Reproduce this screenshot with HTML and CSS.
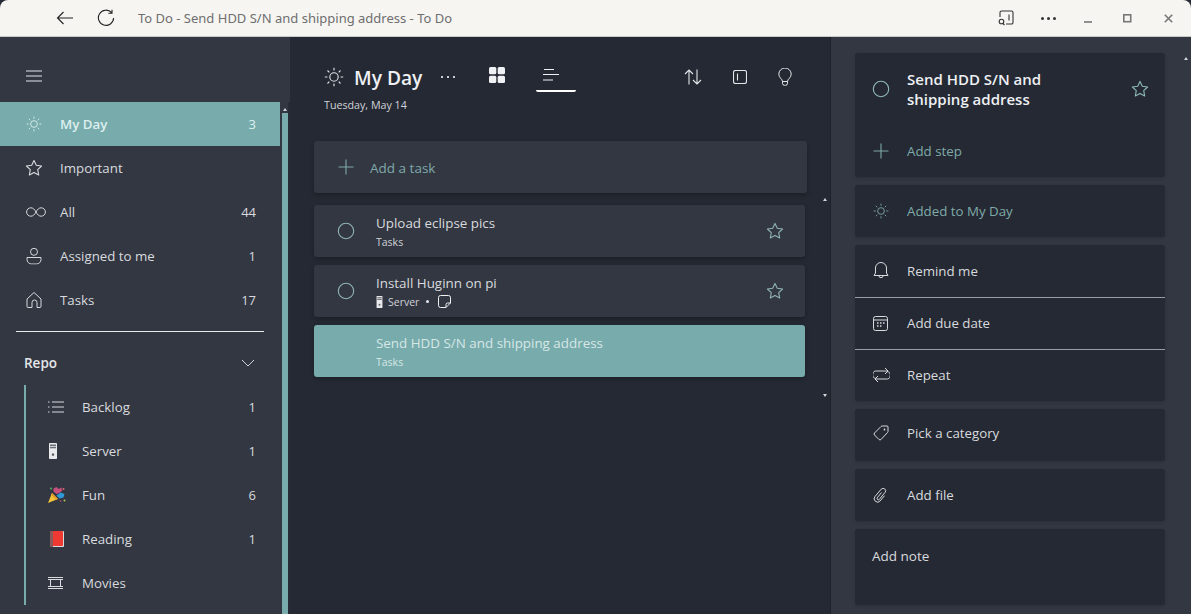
FILE: index.html
```html
<!DOCTYPE html>
<html lang="en">
<head>
<meta charset="UTF-8">
<meta name="viewport" content="width=device-width, initial-scale=1.0">
<title>To Do - Send HDD S/N and shipping address - To Do</title>
<link rel="stylesheet" href="styles.css">
</head>
<body>
<svg class="sprite" width="0" height="0">
    <symbol id="sun" viewBox="0 0 20 20">
        <circle cx="10" cy="10" r="4.2" fill="none" stroke="currentColor" stroke-width="1.1"/>
        <path d="M10 .8v2.6M10 16.6v2.6M.8 10h2.6M16.6 10h2.6M3.5 3.5l1.8 1.8M14.7 14.7l1.8 1.8M3.5 16.5l1.8-1.8M14.7 5.3l1.8-1.8" fill="none" stroke="currentColor" stroke-width="1.1"/>
    </symbol>
    <symbol id="star" viewBox="0 0 18 18">
        <path d="M9 1.4l2.3 4.9 5.3.7-3.9 3.7 1 5.3L9 13.4l-4.7 2.6 1-5.3L1.4 7l5.3-.7z" fill="none" stroke="currentColor" stroke-width="1.1" stroke-linejoin="round"/>
    </symbol>
    <symbol id="ring" viewBox="0 0 18 18">
        <circle cx="9" cy="9" r="7.7" fill="none" stroke="currentColor" stroke-width="1.1"/>
    </symbol>
    <symbol id="plus" viewBox="0 0 16 16">
        <path d="M8 .5v15M.5 8h15" fill="none" stroke="currentColor" stroke-width="1.1"/>
    </symbol>
    <symbol id="server" viewBox="0 0 9 16">
        <rect x=".5" width="8" height="16" rx=".8" fill="#e8eaec"/>
        <rect x="1.5" y="1.5" width="6" height="1.5" fill="#6b7078"/>
        <rect x="1.5" y="3.800" width="6" height="1.500" fill="#6b7078"/>
        <rect x="3.400" y="10.500" width="2.200" height="2.200" fill="#555b63"/>
    </symbol>
</svg>

<header class="titlebar">
    <svg class="tb-back" width="18" height="14" viewBox="0 0 18 14"><path d="M17 7H1.5M7.5 1L1.5 7l6 6" fill="none" stroke="#222" stroke-width="1.1"/></svg>
    <svg class="tb-reload" width="18" height="18" viewBox="0 0 18 18"><path d="M14.6 3.6A7.6 7.6 0 1 0 16.6 9M15 .8v3.4h-3.6" fill="none" stroke="#222" stroke-width="1.1"/></svg>
    <span class="tb-title">To Do - Send HDD S/N and shipping address - To Do</span>
    <div class="tb-controls">
        <svg width="16" height="16" viewBox="0 0 16 16"><path d="M2 7V2.500A1.500 1.500 0 0 1 3.500 1h10A1.500 1.500 0 0 1 15 2.500v10a1.500 1.500 0 0 1-1.500 1.500H8M11 4.500v6" fill="none" stroke="#333" stroke-width="1.100"/><circle cx="3.500" cy="11.500" r="2.300" fill="none" stroke="#333" stroke-width="1.100"/><path d="M5 13.500l1.500 1.500" stroke="#333" stroke-width="1.100"/></svg>
        <span class="tb-dots"><i></i><i></i><i></i></span>
        <svg class="tb-min" width="9" height="9" viewBox="0 0 9 9"><path d="M0 8h8" stroke="#777" stroke-width="1.600"/></svg>
        <svg class="tb-max" width="9" height="9" viewBox="0 0 9 9"><rect x=".8" y=".8" width="6.900" height="6.900" fill="none" stroke="#777" stroke-width="1.600"/></svg>
        <svg class="tb-close" width="9" height="9" viewBox="0 0 9 9"><path d="M.8.800l7.400 7.400M8.200.800L.8 8.200" stroke="#777" stroke-width="1.600"/></svg>
    </div>
</header>

<div class="app">
    <aside class="sidebar">
        <div class="side-head">
            <svg width="16" height="12" viewBox="0 0 16 12"><path d="M0 1h16M0 6h16M0 11h16" stroke="#e4e6ea" stroke-width="1"/></svg>
        </div>
        <div class="side-body">
            <nav class="side-list">
                <div class="nav-row active">
                    <svg class="nav-icon" width="16" height="16"><use href="#sun"/></svg>
                    <span class="nav-name">My Day</span><span class="nav-count">3</span>
                </div>
                <div class="nav-row">
                    <svg class="nav-icon" width="18" height="18"><use href="#star"/></svg>
                    <span class="nav-name">Important</span>
                </div>
                <div class="nav-row">
                    <svg class="nav-icon wide" width="20" height="10" viewBox="0 0 20 10"><path d="M10 5C8.500 2.200 7 .8 4.800.8a4.200 4.200 0 0 0 0 8.400C7 9.200 8.500 7.800 10 5c1.500-2.800 3-4.200 5.200-4.200a4.200 4.200 0 0 1 0 8.400C13 9.200 11.500 7.800 10 5z" fill="none" stroke="currentColor" stroke-width="1"/></svg>
                    <span class="nav-name">All</span><span class="nav-count">44</span>
                </div>
                <div class="nav-row">
                    <svg class="nav-icon" width="16" height="17" viewBox="0 0 16 17"><circle cx="8" cy="4.300" r="3.500" fill="none" stroke="currentColor" stroke-width="1"/><path d="M1 10h14v2a4.500 4.500 0 0 1-4.500 4.500h-5A4.500 4.500 0 0 1 1 12z" fill="none" stroke="currentColor" stroke-width="1"/></svg>
                    <span class="nav-name">Assigned to me</span><span class="nav-count">1</span>
                </div>
                <div class="nav-row">
                    <svg class="nav-icon" width="16" height="17" viewBox="0 0 16 17"><path d="M1 7.500L8 1l7 6.500V15a1 1 0 0 1-1 1h-3v-5a2.500 2.500 0 0 0-5 0v5H2a1 1 0 0 1-1-1z" fill="none" stroke="currentColor" stroke-width="1" stroke-linejoin="round"/></svg>
                    <span class="nav-name">Tasks</span><span class="nav-count">17</span>
                </div>
                <div class="side-rule"></div>
                <div class="group-head">
                    <span>Repo</span>
                    <svg width="14" height="8" viewBox="0 0 14 8"><path d="M1 1l6 6 6-6" fill="none" stroke="#cfd2d8" stroke-width="1"/></svg>
                </div>
                <div class="group-items">
                    <div class="nav-row sub">
                        <svg class="nav-icon" width="16" height="12" viewBox="0 0 16 12"><path d="M4 1h12M4 6h12M4 11h12" stroke="currentColor" stroke-width="1"/><path d="M0 1h1.500M0 6h1.500M0 11h1.500" stroke="currentColor" stroke-width="1.200"/></svg>
                        <span class="nav-name">Backlog</span><span class="nav-count">1</span>
                    </div>
                    <div class="nav-row sub">
                        <svg class="nav-icon left" width="9" height="16"><use href="#server"/></svg>
                        <span class="nav-name">Server</span><span class="nav-count">1</span>
                    </div>
                    <div class="nav-row sub">
                        <svg class="nav-icon right" width="18" height="17" viewBox="0 0 18 17"><path d="M4 6.500L0 16.500l10-4z" fill="#f5c33b"/><path d="M4 6.500l6 6-2 .8-5-5z" fill="#e39a2c"/><path d="M5.500 2l3-1.500 2 2 3-1.500 .5 3.500-3 2-2.500 1-3-2.500z" fill="#c8507c"/><path d="M8.500 9l4-3 4 1.500-1 3.500-4 1z" fill="#2f9ad6"/><circle cx="15.500" cy="2.500" r="1" fill="#e8637a"/><circle cx="3" cy="2" r="1" fill="#58b368"/><circle cx="16.500" cy="14" r="1" fill="#b9c44a"/><circle cx="12.500" cy="14.500" r=".8" fill="#c8507c"/></svg>
                        <span class="nav-name">Fun</span><span class="nav-count">6</span>
                    </div>
                    <div class="nav-row sub">
                        <svg class="nav-icon right" width="14" height="16" viewBox="0 0 14 16"><rect width="14" height="16" rx="1" fill="#d9dbdd"/><rect x="0" y="0" width="13" height="15" rx="1" fill="#ee3a33"/><rect x="0" width="3" height="16" fill="#8a5a5a"/></svg>
                        <span class="nav-name">Reading</span><span class="nav-count">1</span>
                    </div>
                    <div class="nav-row sub">
                        <svg class="nav-icon" width="16" height="12" viewBox="0 0 16 12"><path d="M0 .5h15M0 2.500h15M0 9.500h15M0 11.500h15" stroke="currentColor" stroke-width="1"/><path d="M2.500 2.500v7M12.500 2.500v7" stroke="currentColor" stroke-width="1"/></svg>
                        <span class="nav-name">Movies</span>
                    </div>
                </div>
            </nav>
            <div class="side-scroll"><span class="arrow-up"></span><div class="side-thumb"></div></div>
        </div>
    </aside>

    <main class="main">
        <div class="main-head">
            <div class="head-left">
                <div class="head-title">
                    <svg width="20" height="20"><use href="#sun"/></svg>
                    <h1>My Day</h1>
                    <span class="head-dots"><i></i><i></i><i></i></span>
                </div>
                <p class="head-date">Tuesday, May 14</p>
            </div>
            <div class="view-tabs">
                <div class="view-tab">
                    <svg width="16" height="16" viewBox="0 0 16 16"><rect width="7.300" height="7.300" rx="1.500" fill="#f0f1f4"/><rect x="8.700" width="7.300" height="7.300" rx="1.500" fill="#f0f1f4"/><rect y="8.700" width="7.300" height="7.300" rx="1.500" fill="#f0f1f4"/><rect x="8.700" y="8.700" width="7.300" height="7.300" rx="1.500" fill="#f0f1f4"/></svg>
                </div>
                <div class="view-tab current">
                    <svg width="16" height="12" viewBox="0 0 16 12"><path d="M1 .5h10M0 5.500h16M0 11h10" stroke="#f0f1f4" stroke-width="1"/></svg>
                </div>
            </div>
            <div class="head-tools">
                <svg width="18" height="16" viewBox="0 0 18 16"><path d="M5 15.500V1M1 5l4-4 4 4M13 .5V15M9 11l4 4 4-4" fill="none" stroke="#e4e6ea" stroke-width="1.100"/></svg>
                <svg width="14" height="14" viewBox="0 0 14 14"><rect x=".5" y=".5" width="13" height="13" rx="2" fill="none" stroke="#e4e6ea" stroke-width="1.100"/><path d="M4.500 3.500v7" stroke="#e4e6ea" stroke-width="1.100"/></svg>
                <svg width="14" height="18" viewBox="0 0 14 18"><path d="M4.500 13.500C4.500 11 .8 9.800.8 6.200a6.200 6.200 0 0 1 12.400 0c0 3.600-3.700 4.800-3.700 7.300zM4.500 13.500v1.800a2 2 0 0 0 2 2h1a2 2 0 0 0 2-2v-1.800" fill="none" stroke="#e4e6ea" stroke-width="1"/></svg>
            </div>
        </div>

        <div class="main-body">
            <div class="add-task">
                <svg width="16" height="16"><use href="#plus"/></svg>
                <span>Add a task</span>
            </div>
            <div class="task">
                <svg class="task-ring" width="18" height="18"><use href="#ring"/></svg>
                <div class="task-text"><div class="task-name">Upload eclipse pics</div><div class="task-meta">Tasks</div></div>
                <svg class="task-star" width="18" height="18"><use href="#star"/></svg>
            </div>
            <div class="task">
                <svg class="task-ring" width="18" height="18"><use href="#ring"/></svg>
                <div class="task-text">
                    <div class="task-name">Install Huginn on pi</div>
                    <div class="task-meta">
                        <svg width="7" height="12" viewBox="0 0 9 16"><use href="#server"/></svg>
                        <span>Server</span><span class="meta-dot"></span>
                        <svg width="13" height="13" viewBox="0 0 13 13"><path d="M12.500 8V2.500a2 2 0 0 0-2-2h-8a2 2 0 0 0-2 2v8a2 2 0 0 0 2 2H8zM12.500 8H9.500A1.500 1.500 0 0 0 8 9.500v3" fill="none" stroke="#f0f1f4" stroke-width="1"/></svg>
                    </div>
                </div>
                <svg class="task-star" width="18" height="18"><use href="#star"/></svg>
            </div>
            <div class="task selected">
                <div class="task-text"><div class="task-name">Send HDD S/N and shipping address</div><div class="task-meta">Tasks</div></div>
            </div>
            <span class="arrow-up main-up"></span>
            <span class="arrow-down main-down"></span>
        </div>
    </main>

    <section class="detail">
        <span class="arrow-up detail-up"></span>
        <div class="card head-card">
            <div class="detail-title">
                <svg class="accent" width="18" height="18"><use href="#ring"/></svg>
                <h2>Send HDD S/N and shipping address</h2>
                <svg class="accent" width="18" height="18"><use href="#star"/></svg>
            </div>
            <div class="row muted">
                <svg width="16" height="16"><use href="#plus"/></svg>
                <span>Add step</span>
            </div>
        </div>
        <div class="card">
            <div class="row muted">
                <svg width="16" height="16"><use href="#sun"/></svg>
                <span>Added to My Day</span>
            </div>
        </div>
        <div class="card stack">
            <div class="row ruled">
                <svg width="16" height="17" viewBox="0 0 16 17"><path d="M1 13.500h14l-1.500-2.500V6a5.500 5.500 0 0 0-11 0v5zM5.800 13.500a2.200 2.200 0 0 0 4.400 0" fill="none" stroke="currentColor" stroke-width="1" stroke-linejoin="round"/></svg>
                <span>Remind me</span>
            </div>
            <div class="row ruled">
                <svg width="15" height="15" viewBox="0 0 15 15"><rect x=".5" y=".5" width="14" height="14" rx="2" fill="none" stroke="currentColor" stroke-width="1"/><path d="M.5 4h14" stroke="currentColor" stroke-width="1"/><path d="M4 7h1.500M7 7h1.500M10 7h1.500M4 10h1.500M7 10h1.500" stroke="currentColor" stroke-width="1.300"/></svg>
                <span>Add due date</span>
            </div>
            <div class="row">
                <svg width="17" height="16" viewBox="0 0 17 16"><path d="M3 11.500A3.500 3.500 0 0 1 4 4h11M12 1l3 3-3 3M14 4.500A3.500 3.500 0 0 1 13 12H2M5 9l-3 3 3 3" fill="none" stroke="currentColor" stroke-width="1"/></svg>
                <span>Repeat</span>
            </div>
        </div>
        <div class="card">
            <div class="row raised">
                <svg width="16" height="16" viewBox="0 0 16 16"><path d="M9.500 1H14a1 1 0 0 1 1 1v4.500a1.500 1.500 0 0 1-.5 1L8 14.500a1.500 1.500 0 0 1-2 0L1.500 10a1.500 1.500 0 0 1 0-2L8 1.500A1.500 1.500 0 0 1 9.500 1z" fill="none" stroke="currentColor" stroke-width="1"/><circle cx="11.500" cy="4.500" r=".9" fill="currentColor"/></svg>
                <span>Pick a category</span>
            </div>
        </div>
        <div class="card">
            <div class="row">
                <svg width="14" height="15" viewBox="0 0 14 15"><path d="M8.500 4.500l-4.300 5.400a1.300 1.300 0 0 0 2 1.600l6-7.300a2.500 2.500 0 0 0-3.900-3.100L2 8.500a3.400 3.400 0 0 0 5.200 4.400l4.300-5.200" fill="none" stroke="currentColor" stroke-width="1"/></svg>
                <span>Add file</span>
            </div>
        </div>
        <div class="card note-card">Add note</div>
    </section>
</div>
</body>
</html>
```

FILE: styles.css
```css
* {
    box-sizing: border-box;
}
html, body {
    height: 100%;
    margin: 0;
}
body {
    font-family: "Open Sans", "Noto Sans", sans-serif;
    background-color: #252933;
    color: #e4e6ea;
    overflow: hidden;
    display: flex;
    flex-direction: column;
}
.sprite {
    position: absolute;
}
svg {
    display: block;
    flex-shrink: 0;
}

/* window title bar */
.titlebar {
    height: 37px;
    flex-shrink: 0;
    display: flex;
    align-items: center;
    background-color: #f6f5f2;
    border-bottom: 1px solid #c9c9c9;
    border-radius: 8px 8px 0 0;
    padding-left: 56px;
}
.tb-back {
    margin-right: 23px;
}
.tb-reload {
    margin-right: 23px;
}
.tb-title {
    font-family: "Noto Sans", sans-serif;
    font-size: 13px;
    color: #6e6e6e;
}
.tb-controls {
    margin-left: auto;
    display: flex;
    align-items: center;
    padding-right: 18px;
}
.tb-dots {
    display: flex;
    gap: 3px;
    margin-left: 27px;
    margin-right: 28px;
}
.tb-dots i {
    width: 3px;
    height: 3px;
    border-radius: 50%;
    background-color: #333;
}
.tb-min {
    margin-right: 30px;
}
.tb-max {
    margin-right: 32px;
}

.app {
    flex: 1;
    display: flex;
    min-height: 0;
}

/* left nav */
.sidebar {
    width: 290px;
    flex-shrink: 0;
    background-color: #333742;
    display: flex;
    flex-direction: column;
}
.side-head {
    height: 65px;
    flex-shrink: 0;
    padding: 33px 0 0 26px;
}
.side-body {
    flex: 1;
    display: flex;
    min-height: 0;
    overflow: hidden;
}
.side-list {
    width: 280px;
    flex-shrink: 0;
}
.side-scroll {
    width: 10px;
    display: flex;
    flex-direction: column;
    align-items: center;
    padding-top: 6px;
    background: linear-gradient(to right, #333742 8px, #282c36 8px);
}
.side-thumb {
    width: 6px;
    flex: 1;
    margin-top: 2px;
    background-color: #78abab;
}
.arrow-up, .arrow-down {
    display: block;
    width: 0;
    height: 0;
    border-left: 2.500px solid transparent;
    border-right: 2.500px solid transparent;
}
.arrow-up {
    border-bottom: 3px solid #cfd8d8;
}
.arrow-down {
    border-top: 3px solid #cfd8d8;
}
.nav-row {
    height: 44px;
    display: flex;
    align-items: center;
    padding-left: 34px;
    padding-right: 24px;
    font-size: 13.300px;
    color: #d8dade;
    position: relative;
}
.nav-row .nav-icon {
    position: absolute;
    left: 34px;
    top: 50%;
    transform: translate(-50%, -50%);
}
.nav-row .nav-icon.wide {
    left: 36px;
}
.nav-name {
    margin-left: 26px;
}
.nav-count {
    margin-left: auto;
    font-size: 13px;
}
.nav-row.active {
    background-color: #78abab;
    color: #dcefef;
    font-weight: 600;
}
.nav-row.active .nav-count {
    font-weight: 400;
}
.side-rule {
    height: 1px;
    margin: 9px 16px;
    background-color: #e8e9ec;
}
.group-head {
    height: 44px;
    display: flex;
    align-items: center;
    justify-content: space-between;
    padding: 0 25px 0 24px;
    font-size: 13.500px;
    font-weight: 600;
}
.group-items {
    margin-left: 24px;
    border-left: 2px solid #78abab;
}
.nav-row.sub {
    padding-left: 30px;
    padding-right: 24px;
}
.nav-row.sub .nav-icon {
    left: 30px;
}
.nav-row.sub .nav-icon.left {
    left: 27px;
}
.nav-row.sub .nav-icon.right {
    left: 31px;
}

/* middle column */
.main {
    width: 541px;
    flex-shrink: 0;
    display: flex;
    flex-direction: column;
    border-right: 1px solid #1e2129;
}
.main-head {
    height: 104px;
    flex-shrink: 0;
    display: flex;
    padding: 29px 0 0 34px;
}
.head-left {
    width: 153px;
}
.head-title {
    display: flex;
    align-items: center;
    height: 22px;
}
h1 {
    margin: 0 0 0 10px;
    font-size: 19.200px;
    font-weight: 600;
    color: #eef0f4;
    white-space: nowrap;
}
.head-dots {
    display: flex;
    gap: 4px;
    margin-left: 19px;
}
.head-dots i {
    width: 2px;
    height: 2px;
    background-color: #c9ccd2;
}
.head-date {
    margin: 10px 0 0;
    font-size: 10.700px;
    color: #cfd2d8;
    white-space: nowrap;
}
.view-tabs {
    display: flex;
    align-self: flex-start;
}
.view-tab {
    width: 40px;
    height: 26px;
    display: flex;
    justify-content: center;
    padding-top: 1px;
}
.view-tab.current {
    margin-left: 19px;
    padding: 3px 0 0 7px;
    justify-content: flex-start;
    border-bottom: 2px solid #fff;
    border-radius: 2px;
}
.head-tools {
    display: flex;
    align-items: center;
    gap: 31px;
    height: 22px;
    margin-left: 108px;
    align-self: flex-start;
}
.main-body {
    flex: 1;
    position: relative;
    padding-left: 24px;
}
.add-task {
    width: 493px;
    height: 52px;
    display: flex;
    align-items: center;
    padding-left: 24px;
    background-color: #333742;
    border-radius: 3px;
    box-shadow: 0 2px 5px rgba(0, 0, 0, 0.25);
    color: #7fa9a9;
    font-size: 13.500px;
    margin-bottom: 12px;
}
.add-task span {
    margin-left: 16px;
    padding-top: 2px;
}
.task {
    width: 491px;
    height: 52px;
    display: flex;
    align-items: center;
    padding: 0 21px 0 23px;
    background-color: #333742;
    border-radius: 3px;
    box-shadow: 0 2px 4px rgba(0, 0, 0, 0.25);
    margin-bottom: 8px;
}
.task-ring, .task-star {
    color: #8fb3b3;
}
.task-text {
    margin-left: 21px;
    flex: 1;
    padding-top: 3px;
}
.task-name {
    font-size: 13.400px;
    line-height: 18px;
    color: #d8dade;
}
.task-meta {
    display: flex;
    align-items: center;
    height: 19px;
    font-size: 10.500px;
    color: #cfd2d8;
    gap: 5px;
}
.meta-dot {
    width: 3px;
    height: 3px;
    border-radius: 50%;
    background-color: #e4e6ea;
    margin: 0 4px 0 2px;
}
.task.selected {
    background-color: #78abab;
    padding-left: 41px;
}
.task.selected .task-name, .task.selected .task-meta {
    color: #d6e7e7;
}
.main-up, .main-down {
    position: absolute;
    left: 533px;
}
.main-up {
    top: 57px;
}
.main-down {
    top: 253px;
}

/* right column */
.detail {
    flex: 1;
    background-color: #333742;
    padding: 16px 26px 0 24px;
    display: flex;
    flex-direction: column;
    gap: 8px;
    position: relative;
}
.detail-up {
    position: absolute;
    right: 3px;
    top: 20px;
}
.card {
    background-color: #252933;
    border-radius: 3px;
    box-shadow: 0 1px 3px rgba(0, 0, 0, 0.15);
}
.head-card {
    height: 124px;
}
.detail-title {
    height: 72px;
    display: flex;
    align-items: center;
    padding: 0 16px 0 17px;
    color: #eef0f4;
}
.accent {
    color: #8fbaba;
}
h2 {
    flex: 1;
    margin: 0 60px 0 17px;
    font-size: 15px;
    font-weight: 600;
    line-height: 20px;
}
.row {
    height: 52px;
    display: flex;
    align-items: center;
    padding-left: 18px;
    font-size: 13.300px;
    color: #d8dade;
}
.row span {
    position: absolute;
    left: 76px;
}
.row.muted {
    color: #7fa9a9;
}
.row.ruled {
    border-bottom: 1px solid #9a9da6;
    padding-bottom: 1px;
}
.stack {
    height: 156px;
}
.stack .row:first-child {
    height: 53px;
}
.stack .row:last-child {
    height: 51px;
    padding-bottom: 1px;
}
.row.raised {
    padding-bottom: 4px;
}
.note-card {
    height: 76px;
    padding: 18px 17px;
    font-size: 13.500px;
    color: #d8dade;
}
```
